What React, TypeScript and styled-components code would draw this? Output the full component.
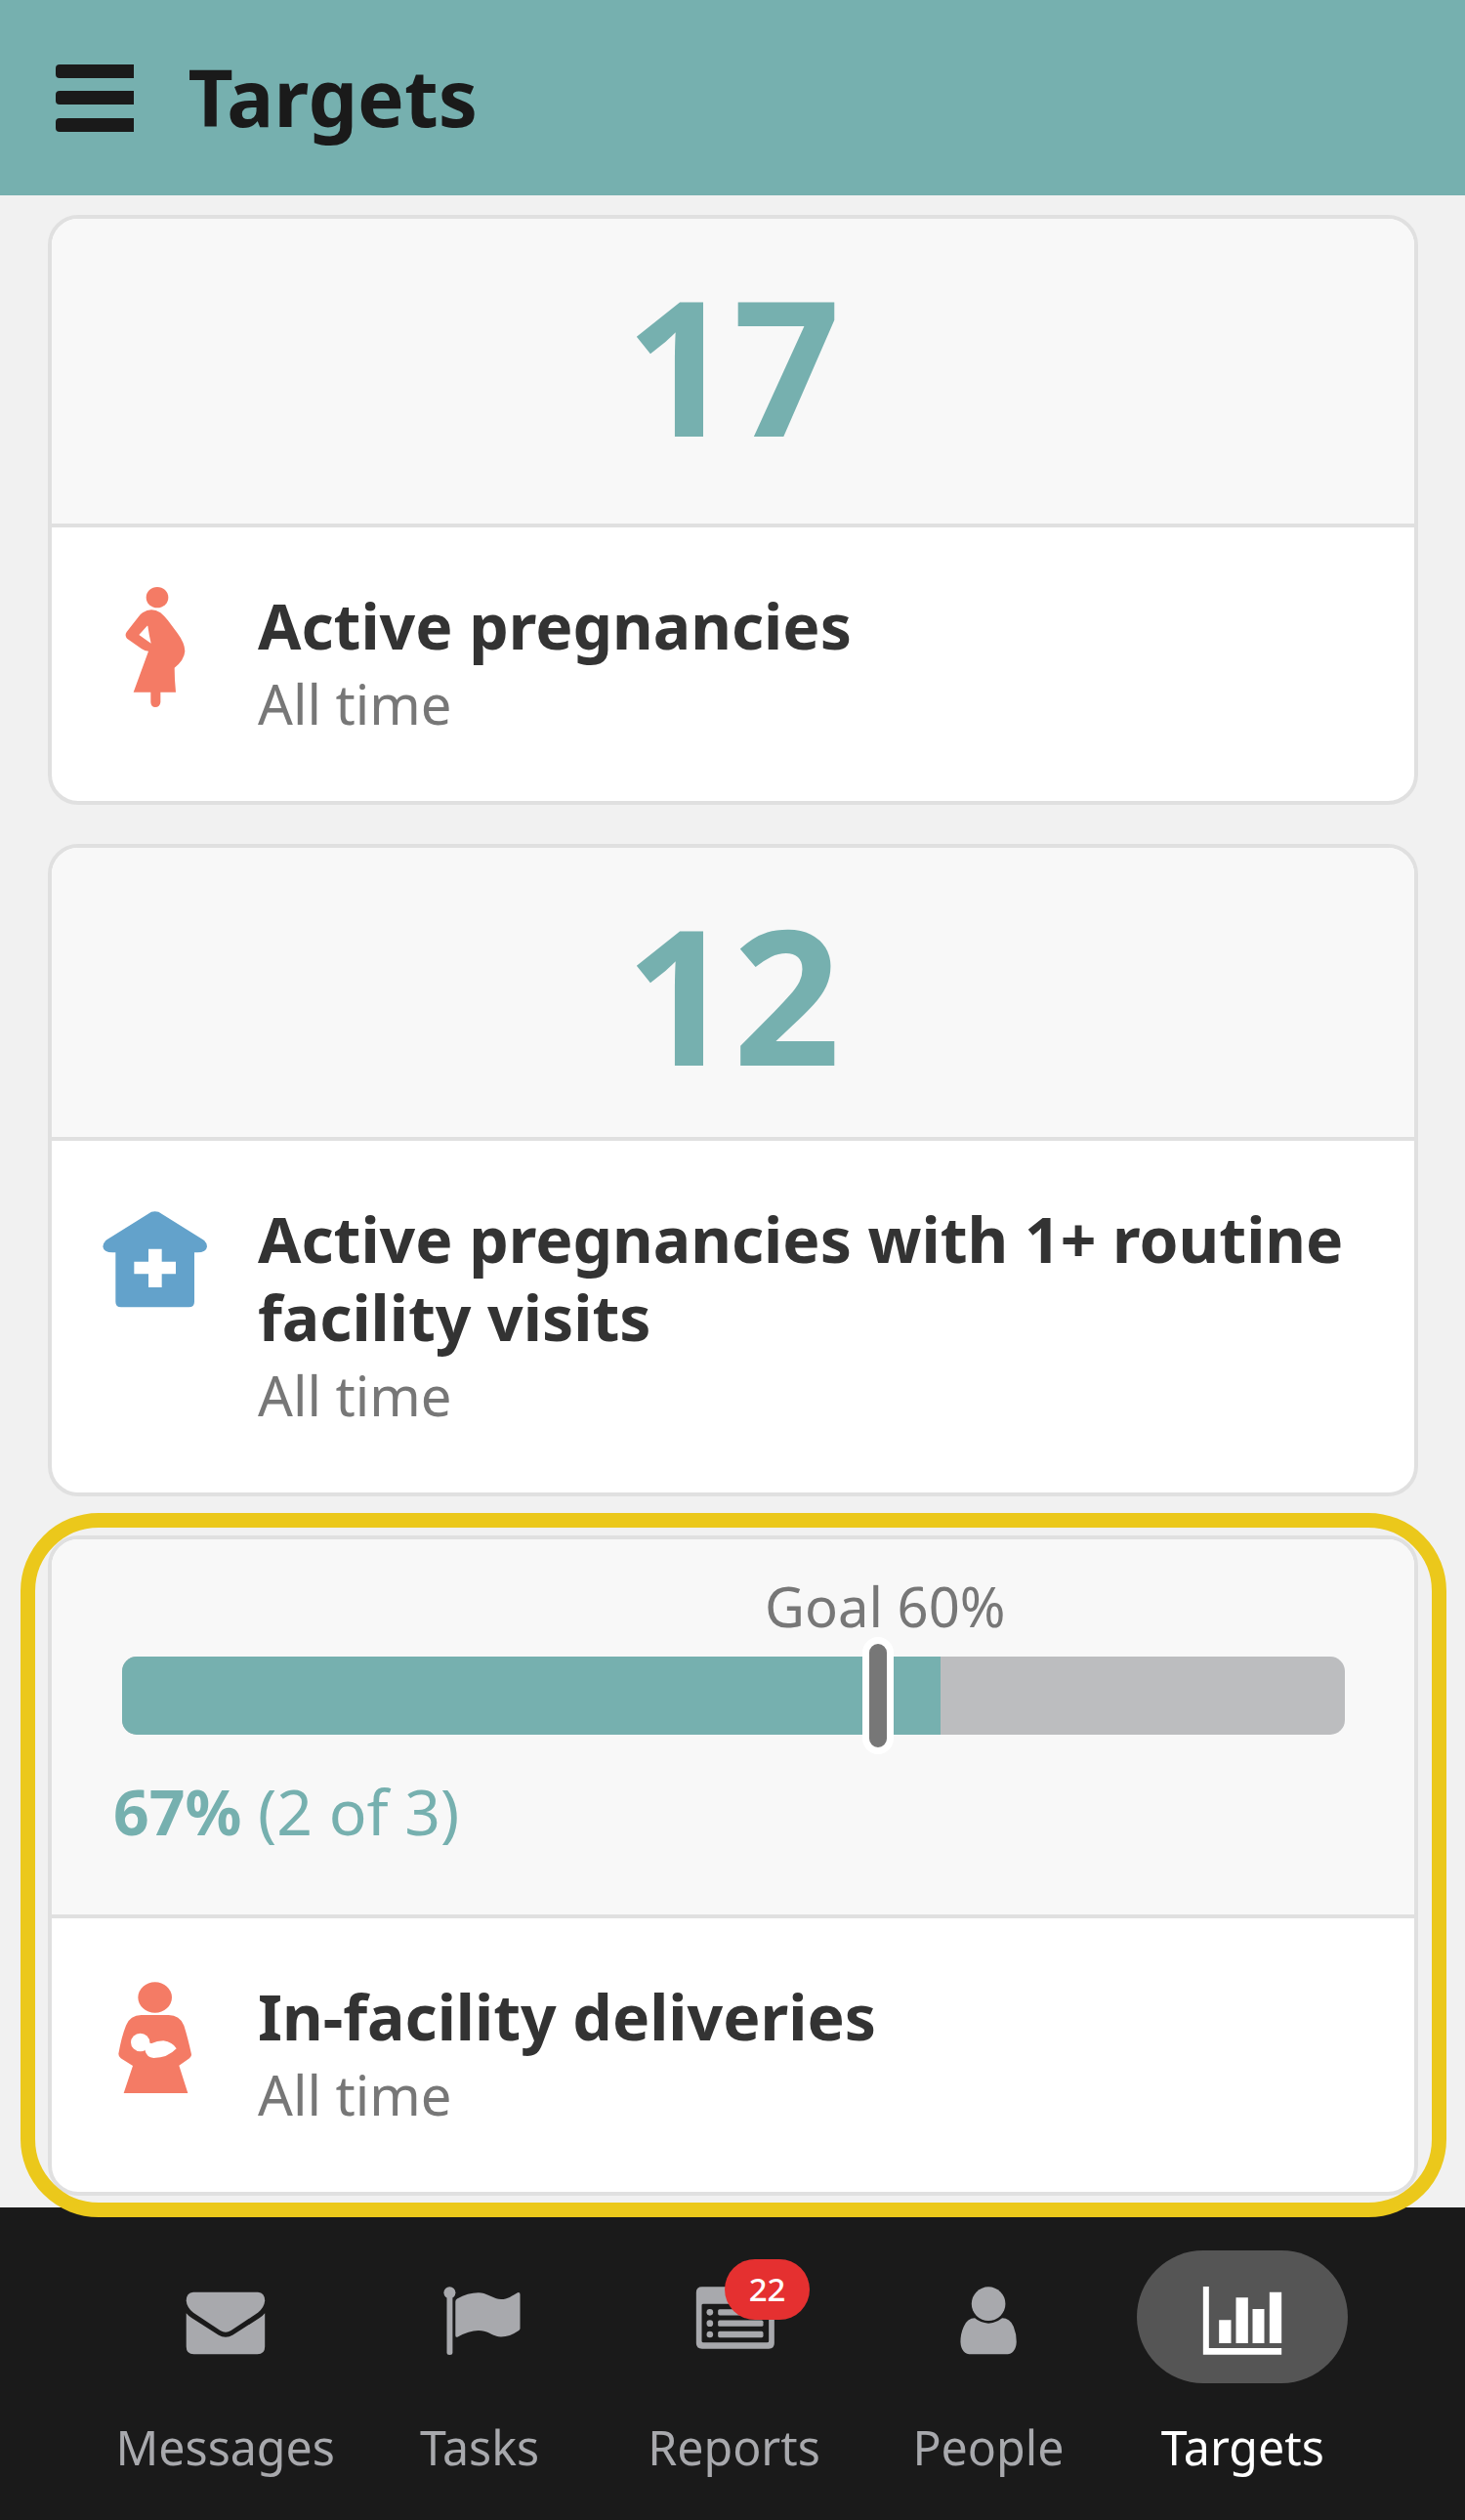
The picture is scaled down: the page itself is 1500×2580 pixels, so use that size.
import React from 'react';
import styled, { createGlobalStyle } from 'styled-components';

const teal = '#76b0af';
const coral = '#f47b65';
const line = '#e0e0e0';

const GlobalStyle = createGlobalStyle`
  *, *::before, *::after { box-sizing: border-box; }
  body {
    margin: 0;
    background: #f1f1f1;
    font-family: "Noto Sans", "Open Sans", sans-serif;
    color: #333;
  }
`;

const Screen = styled.div`
  display: flex;
  flex-direction: column;
  width: 1500px;
  height: 2580px;
  overflow: hidden;
  background: #f1f1f1;
`;

const Header = styled.header`
  display: flex;
  align-items: center;
  gap: 56px;
  flex: none;
  height: 200px;
  padding: 0 56.5px;
  background: ${teal};
  color: #1a1a1a;
`;

const MenuButton = styled.button`
  display: flex;
  flex-direction: column;
  gap: 13.5px;
  width: 80px;
  padding: 0;
  border: 0;
  background: none;
`;

const MenuBar = styled.span`
  height: 14px;
  border-radius: 4px 0 0 4px;
  background: #1a1a1a;
`;

const Title = styled.h1`
  margin: 0 0 2px;
  font-size: 80.2px;
  line-height: 120px;
  font-weight: 700;
`;

const Content = styled.main`
  display: flex;
  flex-direction: column;
  gap: 40px;
  flex: none;
  height: 2060px;
  padding: 20.4px 48px 0 49px;
`;

const CardSlot = styled.div`
  position: relative;
`;

const Card = styled.section`
  border: 4px solid ${line};
  border-radius: 31px;
  overflow: hidden;
  background: #fff;
`;

const CountHeading = styled.div<{ $height: number }>`
  height: ${(p) => p.$height}px;
  padding-top: 47.5px;
  background: #f8f8f8;
  color: ${teal};
  font-size: 192.5px;
  line-height: 200px;
  font-weight: 700;
  text-align: center;
`;

const ProgressHeading = styled.div`
  display: flex;
  flex-direction: column;
  height: 384px;
  padding: 28px 71.5px 0;
  background: #f8f8f8;
`;

const GoalLabel = styled.div`
  padding-left: 658.5px;
  color: #777;
  font-size: 56.2px;
  line-height: 80px;
`;

const Track = styled.div`
  position: relative;
  height: 80px;
  margin-top: 12px;
  border-radius: 15px;
  background: #bcbdbf;
`;

const Fill = styled.div`
  height: 100%;
  border-radius: 15px 0 0 15px;
  background: ${teal};
`;

const GoalMarker = styled.div`
  position: absolute;
  top: -20px;
  width: 32px;
  height: 120px;
  margin-left: 7px;
  border: 7.5px solid #fff;
  border-radius: 16px;
  background: #777;
`;

const ProgressValue = styled.div`
  margin: 37.5px 0 0 -8.5px;
  color: ${teal};
  font-size: 64.2px;
  line-height: 80px;
`;

const CardBody = styled.div`
  display: flex;
  align-items: flex-start;
  gap: 41px;
  padding: 60px 42px;
  border-top: 4px solid ${line};
`;

const TargetIcon = styled.svg`
  flex: none;
  width: 128px;
  height: 124px;
`;

const CardText = styled.div`
  display: flex;
  flex-direction: column;
`;

const Name = styled.h2`
  margin: 0;
  font-size: 64.2px;
  line-height: 80px;
  font-weight: 700;
`;

const Period = styled.div`
  color: #777;
  font-size: 56.2px;
  line-height: 80px;
`;

const Highlight = styled.div`
  position: absolute;
  top: -23px;
  bottom: -22px;
  left: -28.3px;
  right: -29px;
  z-index: 2;
  border: 15px solid #ebc81b;
  border-radius: 80px;
  pointer-events: none;
`;

const NavBar = styled.nav`
  display: flex;
  flex: none;
  height: 320px;
  padding: 44.3px 97.5px 0 100.5px;
  background: #1a1a1a;
`;

const NavItem = styled.a<{ $active?: boolean }>`
  display: flex;
  flex: 1 1 0;
  flex-direction: column;
  align-items: center;
  gap: 35px;
  color: ${(p) => (p.$active ? '#fff' : '#a8a9ad')};
  font-size: 48.3px;
  line-height: 60px;
`;

const NavPill = styled.span<{ $active?: boolean }>`
  position: relative;
  width: 216px;
  height: 136px;
  border-radius: 68px;
  background: ${(p) => (p.$active ? '#555' : 'transparent')};
`;

const NavIcon = styled.svg`
  display: block;
  width: 216px;
  height: 136px;
  fill: currentColor;
`;

const Badge = styled.span`
  position: absolute;
  top: 8.3px;
  left: 98.8px;
  width: 86.5px;
  height: 62px;
  border-radius: 31px;
  background: #e53030;
  color: #fff;
  font-size: 33px;
  line-height: 61px;
  font-weight: 500;
  text-align: center;
`;

const PregnantIcon = () => (
  <TargetIcon viewBox="-45 30 384 372" fill={coral}>
    <ellipse cx="153" cy="65" rx="34" ry="32" />
    <path
      fillRule="evenodd"
      d="M108 112Q135 94 163 112Q175 122 186 136L214 173Q238 205 238 230Q236 257 206 281L207 318L210 356H163V387Q161 402 147 402Q134 402 133 387V356H80L126 230Q115 230 105 223L60 191Q52 181 59 171L96 124Q101 116 108 112ZM122 152L97 180L134 206Q128 182 124 152Z"
    />
  </TargetIcon>
);

const ClinicIcon = () => (
  <TargetIcon viewBox="45 84 384 372" fill="#63a2cb">
    <path
      fillRule="evenodd"
      d="M225 122Q236 119 247 122L384 208Q396 216 396 229Q394 247 366 247H357V398Q357 415 340 415H132Q115 415 115 398V247H106Q78 247 76 229Q77 216 88 208ZM216 236V275H172V313H216V354H257V313H300V275H257V236Z"
    />
  </TargetIcon>
);

const MotherIcon = () => (
  <TargetIcon viewBox="45 132 384 372" fill={coral}>
    <ellipse cx="236" cy="195" rx="52" ry="47" />
    <path d="M194 249H278Q312 249 325 281Q337 318 348 370Q349 377 342 382L310 404L337 489H140L168 405L131 382Q124 376 124 368Q133 316 147 281Q160 249 194 249Z" />
    <ellipse cx="191" cy="333" rx="29" ry="28" fill="#fff" />
    <path
      fill="#fff"
      d="M212 322Q218 338 226 336Q242 328 262 328Q290 332 302 352Q275 381 232 381Q210 379 205 356Z"
    />
  </TargetIcon>
);

const MessagesGlyph = () => (
  <NavIcon viewBox="0 0 216 136">
    <path d="M75 42.7H141Q148.2 43.5 148.2 51.5Q147.5 58.5 141 63.8L113.5 82Q108 85.4 102.5 82L75 63.8Q68.3 58.5 67.7 51.5Q67.7 43.5 75 42.7Z" />
    <path d="M67.7 64.2Q70 67 73.5 69.3L100.5 86.5Q108 91 115.5 86.5L142.5 69.3Q146 67 148.2 64.2V98.5Q148.2 106.3 140.5 106.3H75.5Q67.7 106.3 67.7 98.5Z" />
  </NavIcon>
);

const TasksGlyph = () => (
  <NavIcon viewBox="0 0 216 136">
    <circle cx="77.4" cy="43.3" r="6" />
    <path d="M74.5 46H80.4V104.5Q80.4 107 77.4 107Q74.5 107 74.5 104.5Z" />
    <path d="M83.3 52.5Q83.3 50.8 85 49.6Q96 43.3 106.9 43.3C116 43.3 122 50 130.1 50C137 50 141 46.5 147 43.2Q149.5 42.6 149.5 45V80Q149.5 81.3 147.8 82.3Q139 88.5 130 88.5C122 88.5 117 82 106.9 82Q97 82 85.8 88.6Q83.3 89.5 83.3 87Z" />
  </NavIcon>
);

const ReportsGlyph = () => (
  <NavIcon viewBox="10.5 72 648 408">
    <path
      fillRule="evenodd"
      d="M235 184H440Q457 184 457 201V357Q457 374 440 374H235Q217 374 217 357V201Q217 184 235 184ZM234 240V350Q234 355 239 355H435Q440 355 440 350V240Q440 236 435 236H239Q234 236 234 240Z"
    />
    {[262, 296, 330].map((y) => (
      <React.Fragment key={y}>
        <circle cx="259" cy={y} r="10" />
        <rect x="284" y={y - 9.5} width="139" height="19" rx="5" />
      </React.Fragment>
    ))}
  </NavIcon>
);

const PeopleGlyph = () => (
  <NavIcon viewBox="791.7 72 648 408">
    <circle cx="1116" cy="236" r="52" />
    <path d="M1074 280Q1091 295 1116 296Q1141 295 1158 280Q1182 280 1193 306Q1202 328 1202 353Q1200 391 1168 391H1064Q1032 391 1030 353Q1030 328 1040 306Q1051 280 1074 280Z" />
  </NavIcon>
);

const TargetsGlyph = () => (
  <NavIcon viewBox="133.5 312 648 408">
    <path d="M337 423H355V612H578V632H337Z" />
    <path d="M386 526H423V597H386ZM438 457H475V597H438ZM489 492H525V597H489ZM541 440H578V597H541Z" />
  </NavIcon>
);

const navItems = [
  { label: 'Messages', Glyph: MessagesGlyph },
  { label: 'Tasks', Glyph: TasksGlyph },
  { label: 'Reports', Glyph: ReportsGlyph, badge: 22 },
  { label: 'People', Glyph: PeopleGlyph },
  { label: 'Targets', Glyph: TargetsGlyph, active: true },
];

const TargetInfo = ({ icon, name }: { icon: React.ReactNode; name: string }) => (
  <CardBody>
    {icon}
    <CardText>
      <Name>{name}</Name>
      <Period>All time</Period>
    </CardText>
  </CardBody>
);

const progress = { percent: 67, goal: 60, done: 2, total: 3 };

export default function App() {
  return (
    <Screen>
      <GlobalStyle />
      <Header>
        <MenuButton aria-label="Menu">
          <MenuBar />
          <MenuBar />
          <MenuBar />
        </MenuButton>
        <Title>Targets</Title>
      </Header>

      <Content>
        <Card>
          <CountHeading $height={312}>17</CountHeading>
          <TargetInfo icon={<PregnantIcon />} name="Active pregnancies" />
        </Card>

        <Card>
          <CountHeading $height={296}>12</CountHeading>
          <TargetInfo icon={<ClinicIcon />} name="Active pregnancies with 1+ routine facility visits" />
        </Card>

        <CardSlot>
          <Card>
            <ProgressHeading>
              <GoalLabel>Goal {progress.goal}%</GoalLabel>
              <Track>
                <GoalMarker style={{ left: `${progress.goal}%` }} />
                <Fill style={{ width: `${progress.percent}%` }} />
              </Track>
              <ProgressValue>
                <b>{progress.percent}%</b> ({progress.done} of {progress.total})
              </ProgressValue>
            </ProgressHeading>
            <TargetInfo icon={<MotherIcon />} name="In-facility deliveries" />
          </Card>
          <Highlight />
        </CardSlot>
      </Content>

      <NavBar>
        {navItems.map(({ label, Glyph, badge, active }) => (
          <NavItem key={label} $active={active}>
            <NavPill $active={active}>
              <Glyph />
              {badge && <Badge>{badge}</Badge>}
            </NavPill>
            {label}
          </NavItem>
        ))}
      </NavBar>
    </Screen>
  );
}
